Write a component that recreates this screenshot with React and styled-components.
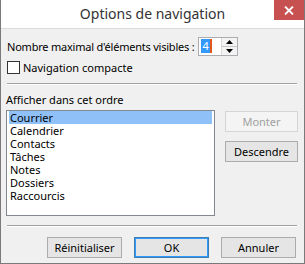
import React from "react";
import styled, { createGlobalStyle } from "styled-components";

const GlobalStyle = createGlobalStyle`
  html, body {
    margin: 0;
    padding: 0;
    background: #ffffff;
  }
  * {
    box-sizing: border-box;
  }
`;

const Window = styled.div`
  width: 305px;
  height: 264px;
  border: 1px solid #7a7a7a;
  border-top: none;
  background: #f0f0f0;
  display: flex;
  flex-direction: column;
  font-family: "Noto Sans", "Open Sans", sans-serif;
  font-size: 11px;
  color: #000;
`;

const TitleBar = styled.div`
  height: 29px;
  background: #ffffff;
  border-bottom: 1px solid #dadada;
  display: flex;
  align-items: flex-start;
  justify-content: center;
  position: relative;
`;

const Title = styled.div`
  font-size: 14px;
  color: #333;
  line-height: 28px;
`;

const CloseBtn = styled.div`
  position: absolute;
  top: 0;
  right: 0;
  width: 30px;
  height: 20px;
  background: #c75050;
  display: flex;
  align-items: center;
  justify-content: center;
`;

const Body = styled.div`
  flex: 1;
  display: flex;
  flex-direction: column;
  padding: 7px 6px 0 5px;
`;

const Row = styled.div`
  display: flex;
  align-items: center;
  gap: ${(p) => p.$gap || 0}px;
  padding-left: ${(p) => p.$indent || 0}px;
  height: ${(p) => p.$h || "auto"}px;
`;

const Label = styled.span`
  white-space: nowrap;
  letter-spacing: ${(p) => p.$tight ? "-0.22px" : "normal"};
`;

const Spin = styled.div`
  margin-left: 4px;
  width: 40px;
  height: 19px;
  border: 1px solid #abadb3;
  background: #fff;
  display: flex;
`;

const SpinInput = styled.div`
  flex: 1;
  display: flex;
  align-items: center;
  padding-left: 2px;
`;

const Selected = styled.span`
  background: #3399ff;
  color: #fff;
  line-height: 14px;
  padding: 0 1px;
`;

const Caret = styled.span`
  width: 2px;
  height: 14px;
  background: #e0581e;
`;

const SpinButtons = styled.div`
  width: 16px;
  display: flex;
  flex-direction: column;
  border-left: 1px solid #d8d8d8;
`;

const SpinBtn = styled.div`
  flex: 1;
  background: #f3f3f3;
  border-bottom: ${(p) => (p.$top ? "1px solid #c8c8c8" : "none")};
  display: flex;
  align-items: center;
  justify-content: center;
`;

const Check = styled.span`
  width: 13px;
  height: 13px;
  border: 1px solid #333;
  background: #fff;
`;

const Separator = styled.div`
  height: 1px;
  background: #a0a0a0;
  border-bottom: 1px solid #fff;
  box-sizing: content-box;
  margin: ${(p) => p.$m};
  margin-left: 1px;
  margin-right: 1px;
`;

const SectionLabel = styled.div`
  line-height: 16px;
  margin-bottom: 2px;
`;

const ListArea = styled.div`
  display: flex;
  gap: 10px;
  align-items: flex-start;
`;

const ListBox = styled.div`
  width: 209px;
  height: 106px;
  border: 1px solid #828790;
  background: #fff;
  padding: 0 2px;
  display: flex;
  flex-direction: column;
`;

const Item = styled.div`
  height: 13px;
  line-height: 13px;
  padding-left: 1px;
  background: ${(p) => (p.$active ? "#8fc0f8" : "transparent")};
`;

const SideButtons = styled.div`
  display: flex;
  flex-direction: column;
  gap: 9px;
  padding-top: 1px;
`;

const Button = styled.div`
  width: ${(p) => p.$w || 75}px;
  height: 21px;
  display: flex;
  align-items: center;
  justify-content: center;
  border: 1px solid ${(p) => (p.$disabled ? "#d5d5d5" : p.$default ? "#3c7fb1" : "#acacac")};
  background: ${(p) => (p.$disabled ? "#f4f4f4" : "#e5e5e5")};
  color: ${(p) => (p.$disabled ? "#a0a0a0" : "#000")};
  box-shadow: ${(p) => (p.$default ? "inset 0 0 0 1px #3399ff" : "none")};
  white-space: nowrap;
`;

const Footer = styled.div`
  display: flex;
  justify-content: flex-end;
  gap: 12px;
  padding-right: 2px;
`;

const items = ["Courrier", "Calendrier", "Contacts", "Tâches", "Notes", "Dossiers", "Raccourcis"];

export default function App() {
  return (
    <>
      <GlobalStyle />
      <Window>
        <TitleBar>
          <Title>Options de navigation</Title>
          <CloseBtn>
            <svg width="10" height="9" viewBox="0 0 10 9">
              <path d="M1 0.5 L9 8.5 M9 0.5 L1 8.5" stroke="#fff" strokeWidth="1.8" />
            </svg>
          </CloseBtn>
        </TitleBar>
        <Body>
          <Row $h={20} $indent={1}>
            <Label $tight>Nombre maximal d'éléments visibles :</Label>
            <Spin>
              <SpinInput>
                <Selected>4</Selected>
                <Caret />
              </SpinInput>
              <SpinButtons>
                <SpinBtn $top>
                  <svg width="7" height="4" viewBox="0 0 7 4">
                    <path d="M0 4 L3.5 0 L7 4 Z" fill="#000" />
                  </svg>
                </SpinBtn>
                <SpinBtn>
                  <svg width="7" height="4" viewBox="0 0 7 4">
                    <path d="M0 0 L7 0 L3.5 4 Z" fill="#000" />
                  </svg>
                </SpinBtn>
              </SpinButtons>
            </Spin>
          </Row>
          <Row $h={18} $indent={1} $gap={3} style={{ marginTop: 2 }}>
            <Check />
            <Label>Navigation compacte</Label>
          </Row>
          <Separator $m="7px 0 7px" />
          <SectionLabel>Afficher dans cet ordre</SectionLabel>
          <ListArea>
            <ListBox>
              {items.map((it, i) => (
                <Item key={it} $active={i === 0}>
                  {it}
                </Item>
              ))}
            </ListBox>
            <SideButtons>
              <Button $w={73} $disabled>
                Monter
              </Button>
              <Button $w={73}>Descendre</Button>
            </SideButtons>
          </ListArea>
          <Separator $m="9px 0 10px" />
          <Footer>
            <Button>Réinitialiser</Button>
            <Button $default>OK</Button>
            <Button>Annuler</Button>
          </Footer>
        </Body>
      </Window>
    </>
  );
}
